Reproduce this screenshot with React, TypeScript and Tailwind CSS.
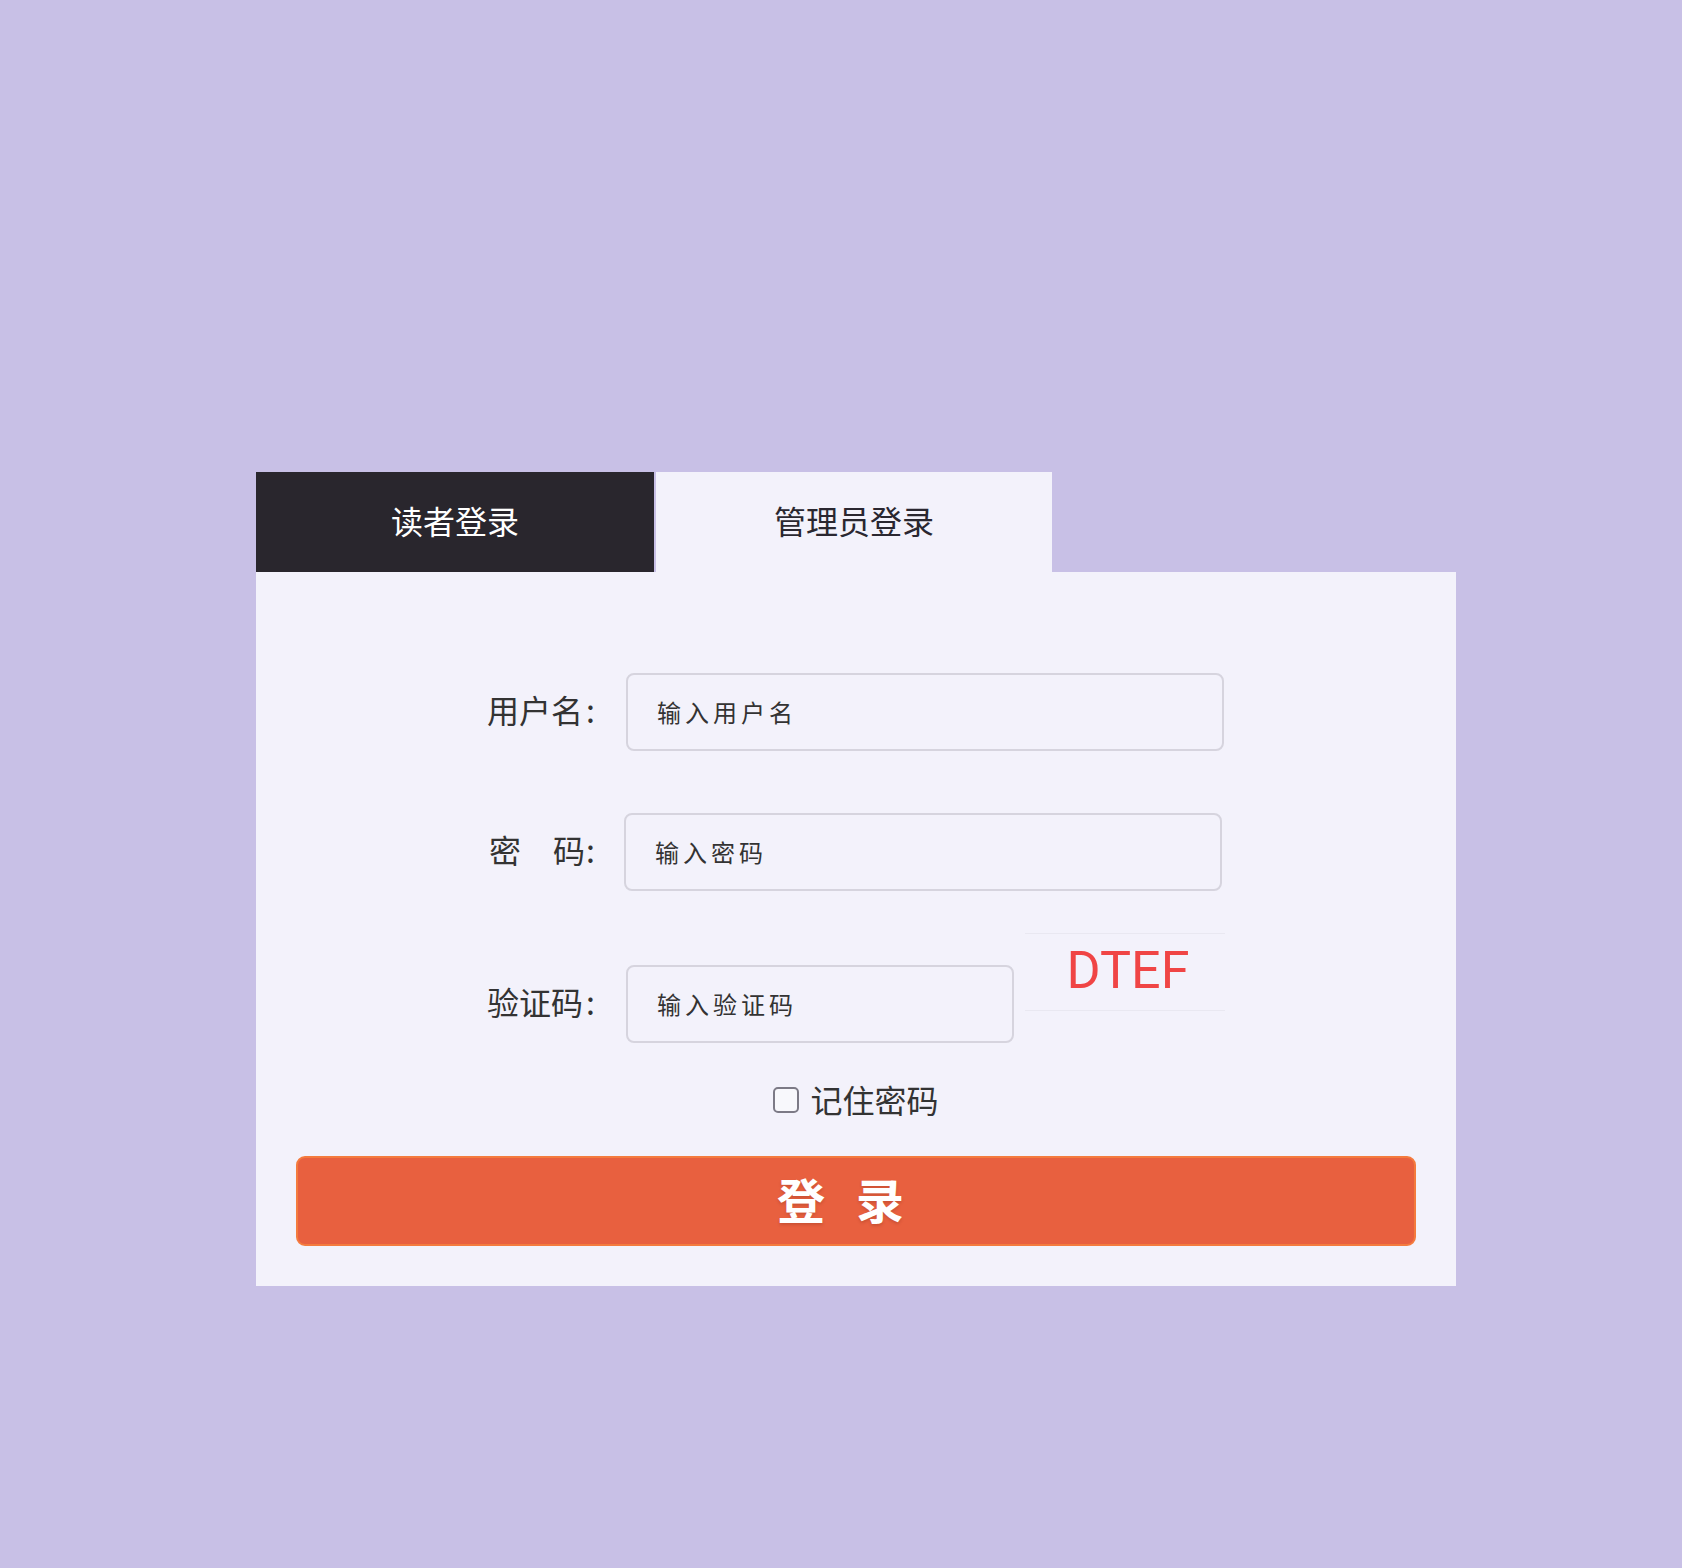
import React from "react";

const font = { fontFamily: '"Noto Sans CJK SC", "Noto Sans", sans-serif' };

function Field({ placeholder, widthClass }: { placeholder: string; widthClass: string }) {
  return (
    <input
      placeholder={placeholder}
      className={`${widthClass} h-[78px] rounded-[8px] border-2 border-[#d6d4de] bg-transparent pl-[29px] pb-[2px] text-[24px] tracking-[4px] text-[#333] placeholder:text-[#333] outline-none`}
      style={font}
    />
  );
}

function Label({ children, className = "" }: { children: React.ReactNode; className?: string }) {
  return (
    <div className={`flex h-[78px] w-[139px] items-center pb-[6px] text-[32px] leading-none text-[#333] ${className}`}>
      {children}
    </div>
  );
}

export default function App() {
  return (
    <div className="min-h-screen w-full bg-[#c8c0e6] pt-[472px] pl-[256px]" style={font}>
      <div className="w-[1200px]">
        <div className="flex h-[100px]">
          <div className="flex w-[398px] items-center justify-center pb-[4px] bg-[#29262d] text-[32px] text-white">
            读者登录
          </div>
          <div className="w-[2px]" />
          <div className="flex w-[396px] items-center justify-center pb-[4px] bg-[#f3f2fb] text-[32px] text-[#2a2730]">
            管理员登录
          </div>
        </div>
        <div className="bg-[#f3f2fb] px-[40px] pt-[101px] pb-[40px]">
          <div className="ml-[191px] w-[740px]">
            <div className="flex items-center">
              <Label>用户名<span className="ml-[3px]">:</span></Label>
              <Field placeholder="输入用户名" widthClass="w-[598px]" />
            </div>
            <div className="mt-[62px] flex items-center">
              <Label className="pl-[2px] !w-[137px]">密　码<span className="ml-[1px]">:</span></Label>
              <Field placeholder="输入密码" widthClass="w-[598px]" />
            </div>
            <div className="mt-[42px] flex items-start">
              <div className="mt-[32px]">
                <Label>验证码<span className="ml-[3px]">:</span></Label>
              </div>
              <div className="mt-[32px]">
                <Field placeholder="输入验证码" widthClass="w-[388px]" />
              </div>
              <div className="ml-[11px] flex h-[78px] w-[200px] items-center justify-center border-y border-[#e9e8f1] pl-[6px]">
                <span
                  className="pb-[2px] text-[52px] leading-none text-[#f04545]"
                  style={{ fontFamily: 'Roboto, "Liberation Sans", sans-serif' }}
                >
                  DTEF
                </span>
              </div>
            </div>
          </div>
          <div className="mt-[43px] flex h-[28px] items-center justify-center">
            <div className="h-[26px] w-[26px] rounded-[5px] border-2 border-[#7c7a86] bg-[#f8f8fc]" />
            <span className="ml-[11px] pb-[2px] text-[32px] leading-none text-[#333]">记住密码</span>
          </div>
          <button
            className="mt-[42px] flex h-[90px] w-[1120px] items-center justify-center rounded-[9px] border-2 border-[#f47b3e] bg-[#e8603f] pb-[6px] text-[48px] font-bold tracking-[31px] text-white"
            style={{ ...font, textShadow: "0 2px 3px rgba(120,40,20,0.25)" }}
          >
            登录
          </button>
        </div>
      </div>
    </div>
  );
}
